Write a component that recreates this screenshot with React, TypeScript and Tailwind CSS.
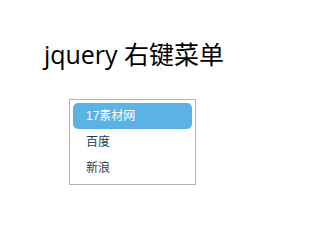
const items = ["17素材网", "百度", "新浪"];

export default function App() {
  return (
    <div className="w-[268px] h-[240px] bg-white font-['Liberation_Sans','Noto_Sans_CJK_SC',sans-serif]">
      <h1 className="pt-[37px] text-center text-[25px] leading-[35px] text-black font-normal font-['Open_Sans','Noto_Sans_CJK_SC',sans-serif]">
        jquery 右键菜单
      </h1>
      <ul className="ml-[69px] mt-[27px] w-[127px] border border-[#b3b3b3] p-[3px]">
        {items.map((item, i) => (
          <li
            key={item}
            className={
              i === 0
                ? "h-[26px] pl-[13px] flex items-center rounded-[5px] bg-[#5ab3e4] text-white text-[12px]"
                : "h-[26px] pl-[13px] flex items-center text-[#1f3a5a] text-[12px]"
            }
          >
            {item}
          </li>
        ))}
      </ul>
    </div>
  );
}
